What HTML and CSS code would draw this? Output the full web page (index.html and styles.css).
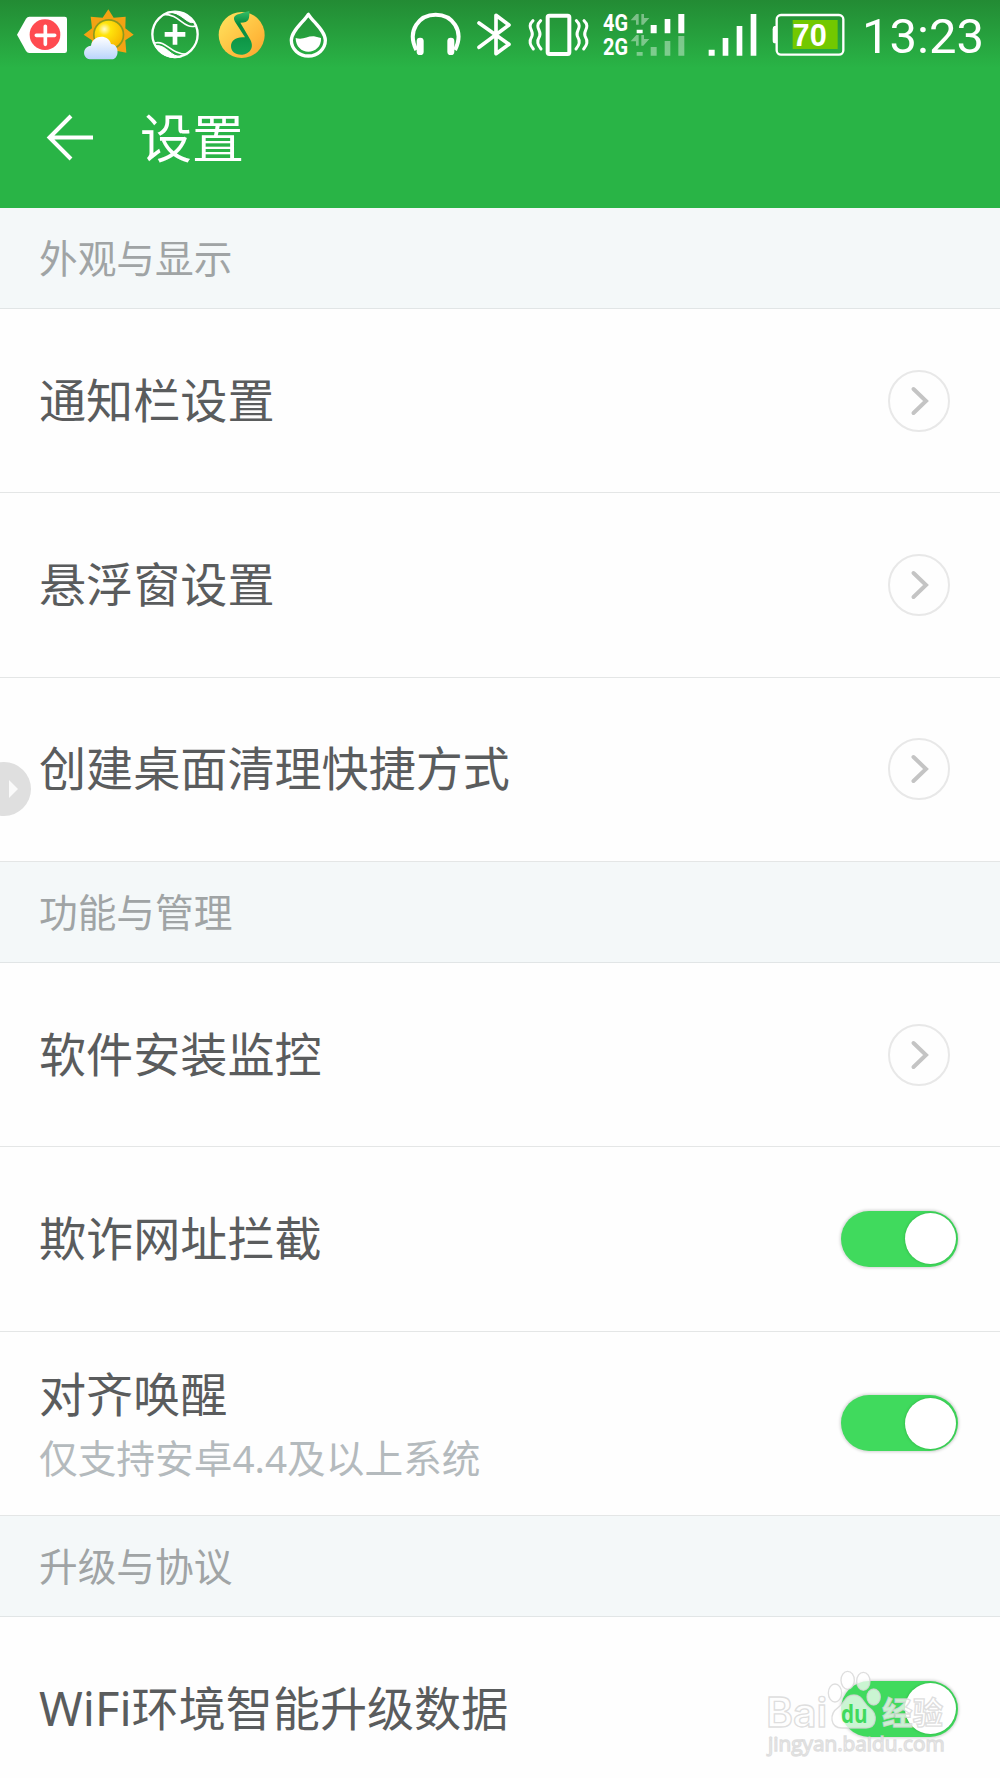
FILE: index.html
```html
<!DOCTYPE html>
<html lang="zh-CN">
<head>
  <meta charset="utf-8">
  <title>设置</title>
  <link rel="stylesheet" href="styles.css">
</head>
<body>
  <header class="header">
    <div class="status-bar">
      <div class="status-left">
        <svg width="60" height="70" viewBox="45 0 180 210">
          <path d="M51 104L78 56Q82 50 88 50H194Q201 50 201 57V152Q201 159 194 159H88Q82 159 78 153Z" fill="#fff"/>
          <circle cx="135" cy="104" r="46" fill="#ff4b50"/>
          <path d="M109 106H164M136 79V133" stroke="#fff" stroke-width="11" stroke-linecap="round"/>
        </svg>
        <svg width="68" height="70" viewBox="225 0 204 210">
          <defs>
            <radialGradient id="sun" cx=".35" cy=".3" r=".75">
              <stop offset="0" stop-color="#fffbd0"/>
              <stop offset=".3" stop-color="#ffe40c"/>
              <stop offset="1" stop-color="#f7b500"/>
            </radialGradient>
            <linearGradient id="cloud" x2="0" y2="1">
              <stop offset="0" stop-color="#fff"/>
              <stop offset="1" stop-color="#b9d4fb"/>
            </linearGradient>
          </defs>
          <path d="M325 28L341 53L377 50L376 85L401 104L376 121L379 158L341 151L325 175L310 151L274 157L276 121L251 104L276 85L272 50L308 53Z" fill="#f3a313"/>
          <circle cx="326" cy="104" r="47" fill="#8b9a1c"/>
          <circle cx="326" cy="104" r="42" fill="url(#sun)"/>
          <path d="M270 178C245 174 247 139 273 137C278 104 325 101 333 132C358 132 359 174 338 178Z" fill="url(#cloud)"/>
        </svg>
        <svg width="68" height="70" viewBox="429 0 204 210">
          <circle cx="525" cy="103" r="68" fill="none" stroke="#fff" stroke-width="7"/>
          <path d="M491 43C540 43 550 88 587 78M464 129C500 120 510 163 562 163" fill="none" stroke="#fff" stroke-width="5"/>
          <path d="M500 37C545 33 560 75 582 67C570 45 535 28 500 37ZM465 137C500 132 510 172 545 170C515 180 480 165 465 137Z" fill="#fff" stroke="#fff" stroke-width="3"/>
          <path d="M494 103H556M525 72V134" stroke="#fff" stroke-width="14"/>
        </svg>
        <svg width="68" height="70" viewBox="633 0 204 210">
          <defs>
            <linearGradient id="disc" x2="1" y2="1">
              <stop offset="0" stop-color="#ffe55f"/>
              <stop offset=".7" stop-color="#ffb83a"/>
              <stop offset="1" stop-color="#f6a42f"/>
            </linearGradient>
            <linearGradient id="note" x2="0" y2="1">
              <stop offset="0" stop-color="#36bf68"/>
              <stop offset=".3" stop-color="#07893d"/>
              <stop offset="1" stop-color="#15a451"/>
            </linearGradient>
          </defs>
          <circle cx="725" cy="105" r="69" fill="url(#disc)"/>
          <path d="M748 33C748 56 749 68 721 68L751 119C766 148 742 164 724 164C704 164 693 154 693 138C693 120 710 109 735 112L705 65C694 43 717 43 748 33Z" fill="url(#note)"/>
        </svg>
        <svg width="54" height="70" viewBox="837 0 162 210">
          <path d="M925 43C913 64 874 92 874 121A51 47 0 0 0 976 121C976 92 937 64 925 43Z" fill="none" stroke="#fff" stroke-width="10" stroke-linejoin="round"/>
          <path d="M887 114C910 121 920 108 942 109L963 114C965 140 945 155 925 155C905 155 887 140 887 114Z" fill="#fff"/>
        </svg>
      </div>
      <div class="status-right">
        <svg width="60" height="70" viewBox="50 0 180 210">
          <path d="M78 150C48 90 88 44 136 44S224 90 194 150" fill="none" stroke="#fff" stroke-width="12"/>
          <rect x="79" y="113" width="21" height="52" rx="10" fill="#fff"/>
          <rect x="171" y="113" width="21" height="52" rx="10" fill="#fff"/>
        </svg>
        <svg width="52" height="70" viewBox="230 0 156 210">
          <path d="M266 69L356 133L317 161V46L356 75L266 142" fill="none" stroke="#fff" stroke-width="11" stroke-linejoin="round" stroke-linecap="round"/>
        </svg>
        <svg width="78" height="70" viewBox="386 0 234 210">
          <rect x="472" y="47" width="65" height="115" rx="5" fill="none" stroke="#fff" stroke-width="12"/>
          <path d="M428 62C407 82 432 92 425 108C415 125 419 135 429 147M451 62C430 82 455 92 448 108C438 125 442 135 452 147M558 62C579 82 554 92 561 108C571 125 567 135 557 147M581 62C602 82 577 92 584 108C594 125 590 135 580 147" fill="none" stroke="#fff" stroke-width="9" stroke-linecap="round"/>
        </svg>
        <div class="network">
          <span>4G</span>
          <span>2G</span>
        </div>
        <svg width="60" height="70" viewBox="718 0 180 210">
          <g fill="#fff" opacity=".4">
            <path d="M720 61L737 42H744V74H736V61ZM752 42H760V54H776L758 74H752ZM720 124L737 105H744V137H736V124ZM752 105H760V117H776L758 137H752Z"/>
            <path d="M738 156h18v11h-18zM780 141h18v26h-18zM822 123h17v44h-17zM863 108h18v59h-18z"/>
          </g>
          <path d="M738 89h18v11h-18zM780 75h18v25h-18zM822 57h17v43h-17zM863 42h18v58h-18z" fill="#fff"/>
        </svg>
        <svg width="72" height="70" viewBox="-2 0 216 210">
          <path d="M54 149h18v18H54zM96 114h17v53H96zM138 78h17v89h-17zM180 42h17v125h-17z" fill="#fff"/>
        </svg>
        <svg width="84" height="70" viewBox="214 0 252 210">
          <path d="M306 60h135v87H306" fill="#72c800"/>
          <rect x="258" y="45" width="200" height="119" rx="13" fill="none" stroke="#fff" stroke-width="7"/>
          <path d="M256 78H251Q246 79 246 88V120Q246 130 251 130H256Z" fill="#fff"/>
          <text x="357" y="138" class="battery-text">70</text>
        </svg>
        <span class="clock">13:23</span>
      </div>
    </div>
    <div class="title-bar">
      <svg class="back" width="50" height="50" viewBox="0 0 50 50">
        <path d="M27 3L5.500 24.500L27 46M5.500 24.500H49" fill="none" stroke="#fff" stroke-width="4"/>
      </svg>
      <h1>设置</h1>
    </div>
  </header>

  <main>
    <h2 class="section">外观与显示</h2>
    <div class="row">
      <span class="label">通知栏设置</span>
      <svg class="arrow" viewBox="0 0 62 62"><circle cx="31" cy="31" r="30"/><path d="M25.500 19L38 31L25.500 43"/></svg>
    </div>
    <div class="row">
      <span class="label">悬浮窗设置</span>
      <svg class="arrow" viewBox="0 0 62 62"><circle cx="31" cy="31" r="30"/><path d="M25.500 19L38 31L25.500 43"/></svg>
    </div>
    <div class="row">
      <span class="label">创建桌面清理快捷方式</span>
      <svg class="arrow" viewBox="0 0 62 62"><circle cx="31" cy="31" r="30"/><path d="M25.500 19L38 31L25.500 43"/></svg>
      <div class="float-handle"></div>
    </div>

    <h2 class="section">功能与管理</h2>
    <div class="row">
      <span class="label">软件安装监控</span>
      <svg class="arrow" viewBox="0 0 62 62"><circle cx="31" cy="31" r="30"/><path d="M25.500 19L38 31L25.500 43"/></svg>
    </div>
    <div class="row">
      <span class="label">欺诈网址拦截</span>
      <div class="toggle"></div>
    </div>
    <div class="row">
      <div class="text">
        <span class="label">对齐唤醒</span>
        <span class="desc">仅支持安卓4.4及以上系统</span>
      </div>
      <div class="toggle"></div>
    </div>

    <h2 class="section">升级与协议</h2>
    <div class="row">
      <span class="label">WiFi环境智能升级数据</span>
      <div class="toggle"></div>
    </div>
  </main>

  <svg class="watermark" viewBox="0 0 780 414">
    <g class="mark">
      <text class="bai" x="78" y="260" textLength="184" lengthAdjust="spacingAndGlyphs">Bai</text>
      <ellipse cx="285" cy="159" rx="20" ry="27"/>
      <ellipse cx="323" cy="121" rx="20" ry="27"/>
      <ellipse cx="370" cy="124" rx="20" ry="27"/>
      <ellipse cx="401" cy="171" rx="20" ry="24"/>
      <path d="M342 165C367 165 370 190 388 203C415 222 411 264 378 264H306C270 264 266 222 295 202C315 188 315 165 342 165Z"/>
      <text x="427" y="251" font-size="91" font-weight="700">经验</text>
      <text x="84" y="332" font-size="59" textLength="530" lengthAdjust="spacingAndGlyphs">jingyan.baidu.com</text>
    </g>
    <text class="du" x="303" y="248" font-size="75" textLength="80" lengthAdjust="spacingAndGlyphs">du</text>
  </svg>
</body>
</html>
```
FILE: styles.css
```css
* {
  box-sizing: border-box;
}
body {
  margin: 0;
  width: 1000px;
  height: 1778px;
  overflow: hidden;
  position: relative;
  background: #fefefe;
  font-family: "Noto Sans", "Noto Sans CJK SC", sans-serif;
}
svg {
  display: block;
  flex: none;
}

/* header */
.header {
  height: 208px;
  background: linear-gradient(#238b34 0, #29b446 68px);
  color: #fff;
}
.status-bar {
  display: flex;
  justify-content: space-between;
  height: 70px;
  padding: 0 15px;
}
.status-left,
.status-right {
  display: flex;
}
.network {
  display: flex;
  flex-direction: column;
  width: 33px;
  padding: 11px 0 0 6px;
  font: 700 24px/24px Roboto, sans-serif;
}
.network span {
  transform: scaleX(0.83);
  transform-origin: left;
}
.battery-text {
  fill: #fff;
  font: 700 92px "Liberation Sans", sans-serif;
  text-anchor: middle;
}
.clock {
  width: 123px;
  margin-left: 16px;
  font: 400 49px/73px Roboto, sans-serif;
  white-space: nowrap;
}
.title-bar {
  display: flex;
  align-items: center;
  height: 136px;
  padding-left: 44px;
}
.title-bar h1 {
  margin: 0 0 0 46px;
  font-size: 52px;
  font-weight: 400;
  line-height: 60px;
}

/* list */
.section {
  height: 101px;
  margin: 0;
  padding-left: 39px;
  border-bottom: 1px solid #e1e5e6;
  background: #f4f8f9;
  color: #a0a4a5;
  font-size: 38.7px;
  font-weight: 400;
  line-height: 101px;
}
.row {
  display: flex;
  align-items: center;
  justify-content: space-between;
  position: relative;
  height: 184.33px;
  padding: 0 42px 0 39px;
  border-bottom: 1px solid #e4e6e6;
}
.label {
  padding-bottom: 2px;
  color: #5a5c5d;
  font-size: 47.1px;
  line-height: 62px;
}
.text {
  display: flex;
  flex-direction: column;
  padding-top: 6px;
}
.desc {
  color: #b4babd;
  font-size: 38.7px;
  line-height: 62px;
}
.arrow {
  width: 62px;
  height: 62px;
  margin-right: 8px;
  fill: none;
}
.arrow circle {
  stroke: #e8e8e8;
  stroke-width: 2;
}
.arrow path {
  stroke: #c4c4c4;
  stroke-width: 4;
  stroke-linecap: round;
}
.toggle {
  display: flex;
  align-items: center;
  justify-content: flex-end;
  width: 117px;
  height: 56px;
  padding-right: 2px;
  border-radius: 28px;
  background: #40da5d;
  box-shadow: 0 0 3px 1px #d2d2d2;
}
.toggle::after {
  content: "";
  width: 51px;
  height: 51px;
  border-radius: 50%;
  background: #fff;
  box-shadow: 0 0 3px rgba(0, 80, 0, 0.3);
}

/* edge handle floating above the list */
.float-handle {
  position: absolute;
  left: -23px;
  top: 84px;
  width: 54px;
  height: 54px;
  border-radius: 50%;
  background: #dfdfdf;
}
.float-handle::after {
  content: "";
  position: absolute;
  left: 32px;
  top: 18px;
  border: solid transparent;
  border-width: 9px 0 9px 9px;
  border-left-color: #fafafa;
}

/* watermark */
.watermark {
  position: absolute;
  left: 740px;
  top: 1640px;
  width: 260px;
  height: 138px;
}
.mark {
  fill: #fff;
  fill-opacity: 0.72;
  stroke: #d6d6d6;
  stroke-width: 4;
  stroke-opacity: 0.8;
  font-family: "Open Sans", "Noto Sans CJK SC", sans-serif;
}
.bai {
  font: 600 121px Inter, sans-serif;
}
.du {
  fill: #40da5d;
  font-family: "Open Sans", sans-serif;
  font-weight: 700;
}
```
